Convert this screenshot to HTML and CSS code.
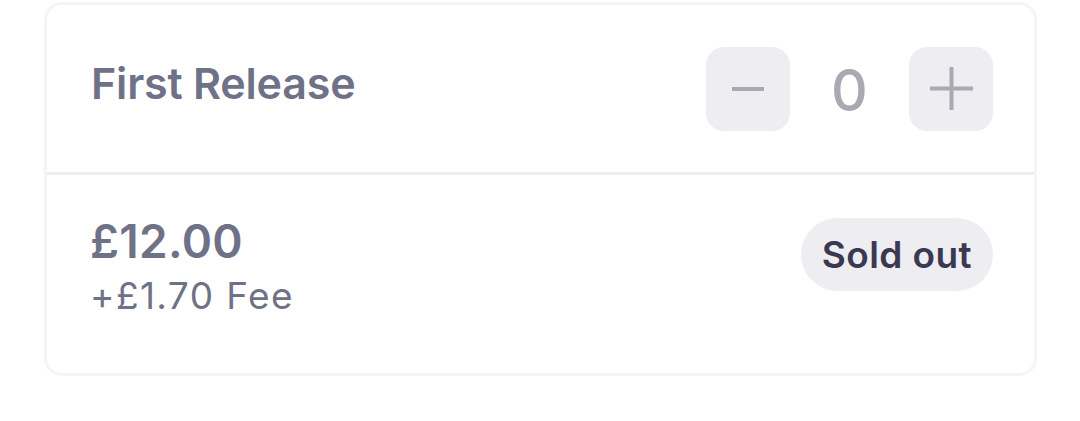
FILE: index.html
```html
<!DOCTYPE html>
<html>
<head>
<meta charset="utf-8">
<link rel="stylesheet" href="styles.css">
</head>
<body>
<div class="card">
  <div class="card-top">
    <div class="title">First Release</div>
    <div class="stepper">
      <button class="step-btn" aria-label="decrease">
        <svg width="32" height="32" viewBox="0 0 32 32"><path d="M0 16H32" stroke="#a9a8b3" stroke-width="4" fill="none"/></svg>
      </button>
      <span class="qty">0</span>
      <button class="step-btn" aria-label="increase">
        <svg width="43" height="43" viewBox="0 0 43 43"><path d="M0 21.5H43M21.5 0V43" stroke="#a9a8b3" stroke-width="4" fill="none"/></svg>
      </button>
    </div>
  </div>
  <div class="card-bottom">
    <div class="price-block">
      <div class="price">£12.00</div>
      <div class="fee">+£1.70 Fee</div>
    </div>
    <div class="pill">Sold out</div>
  </div>
</div>
</body>
</html>
```
FILE: styles.css
```css
html, body {
  margin: 0;
  padding: 0;
  background: #ffffff;
}
body {
  font-family: Inter, "Noto Sans", sans-serif;
  padding: 2px 43px 0 44px;
}
.card {
  border: 3px solid #f5f5f7;
  border-radius: 18px;
  width: 987px;
  box-sizing: content-box;
}
.card-top {
  height: 167px;
  display: flex;
  align-items: center;
  justify-content: space-between;
  padding: 0 41px 0 44px;
  border-bottom: 3px solid #eeedf2;
}
.title {
  font-size: 43px;
  font-weight: 600;
  color: #6f7287;
  letter-spacing: -0.2px;
  margin-top: -12px;
}
.stepper {
  display: flex;
  align-items: center;
}
.step-btn {
  width: 84px;
  height: 84px;
  border: none;
  border-radius: 18px;
  background: #eeedf2;
  display: flex;
  align-items: center;
  justify-content: center;
  padding: 0;
}
.qty {
  width: 119px;
  text-align: center;
  font-size: 57px;
  font-weight: 500;
  color: #a9a8b3;
  line-height: 1;
  margin-top: 4px;
}
.card-bottom {
  height: 198px;
  display: flex;
  align-items: flex-start;
  justify-content: space-between;
  padding: 40px 41px 0 43px;
  box-sizing: border-box;
}
.price {
  font-size: 46px;
  font-weight: 600;
  color: #6f7287;
  line-height: 52px;
  letter-spacing: 0.3px;
}
.fee {
  font-size: 37px;
  font-weight: 400;
  color: #6f7287;
  line-height: 58px;
  letter-spacing: 1.4px;
}
.pill {
  height: 73px;
  padding: 0 21px;
  border-radius: 37px;
  background: #eeedf2;
  color: #3b3951;
  font-size: 37px;
  font-weight: 600;
  letter-spacing: 0.4px;
  display: flex;
  align-items: center;
  margin-top: 3px;
}
```
